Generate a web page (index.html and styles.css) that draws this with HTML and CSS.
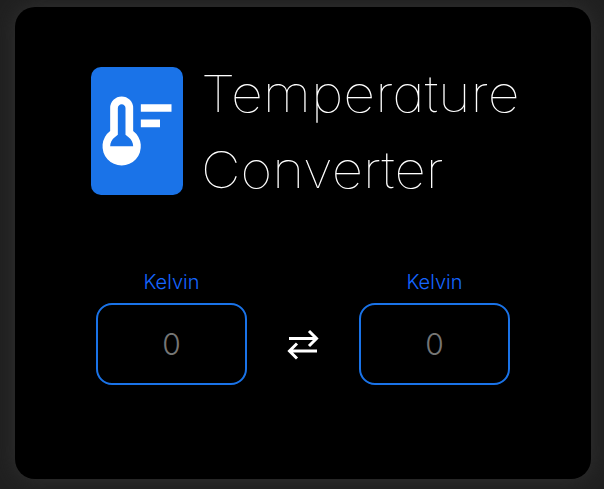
FILE: index.html
```
<!DOCTYPE html>
<html lang="en">
<head>
<meta charset="utf-8">
<title>Temperature Converter</title>
<link rel="stylesheet" href="styles.css">
</head>
<body>
<main class="card">
  <header class="header">
    <div class="logo">
      <svg viewBox="0 0 24 24" width="92" height="92" aria-hidden="true">
        <path fill="#fff" fill-rule="evenodd" d="M13 5h8v2h-8zM13 9h5v2h-5zM8 3a3 3 0 0 0-3 3v6a5 5 0 1 0 6 0V6a3 3 0 0 0-3-3zM5 16c0-.94.45-1.84 1.2-2.4L7 13V6c0-.55.45-1 1-1s1 .45 1 1v7l.8.6c.75.57 1.2 1.46 1.2 2.4z"/>
      </svg>
    </div>
    <h1 class="title"><span class="first">Temperature</span><br><span class="second">Converter</span></h1>
  </header>
  <section class="converter">
    <div class="field">
      <label class="label" for="from">Kelvin</label>
      <input class="value" id="from" placeholder="0">
    </div>
    <svg class="swap" viewBox="0 0 32 32" width="32" height="32" fill="none" stroke="#fff" stroke-width="3" aria-hidden="true">
      <path d="M2 10.5h27M22 3l7.500 7.500L22 18"/>
      <path d="M30 23H3M10 15.500L2.500 23l7.500 7.500"/>
    </svg>
    <div class="field">
      <label class="label" for="to">Kelvin</label>
      <input class="value" id="to" placeholder="0">
    </div>
  </section>
</main>
</body>
</html>
```
FILE: styles.css
```
* {
  box-sizing: border-box;
}
body {
  margin: 0;
  height: 489px;
  padding: 7px 13px 10px 15px;
  overflow: hidden;
  background: #202020;
  font-family: Inter, "Open Sans", sans-serif;
  font-feature-settings: "cv11";
}
.card {
  width: 576px;
  height: 472px;
  padding: 50px 76px 0;
  border-radius: 20px;
  background: #000;
  box-shadow: 0 0 20px #303030;
}
.header {
  display: flex;
  align-items: center;
  gap: 18px;
  height: 148px;
}
.logo {
  display: flex;
  align-items: center;
  flex: none;
  width: 92px;
  height: 128px;
  border-radius: 10px;
  background: #1a73e8;
}
.title {
  margin: 2px 0 0;
  color: #fff;
  font-size: 50px;
  font-weight: 130;
  line-height: 76px;
  white-space: nowrap;
}
.first,
.second {
  display: inline-block;
  transform-origin: left center;
}
.first {
  transform: scaleX(1.113);
}
.second {
  transform: scaleX(1.093);
}
.converter {
  display: flex;
  align-items: flex-end;
  justify-content: space-between;
  width: 414px;
  height: 120px;
  margin: 60px 0 0 5px;
}
.field {
  display: flex;
  flex-direction: column;
  align-items: center;
}
.label {
  margin-bottom: 6px;
  color: #1565ff;
  font-size: 20px;
  font-weight: 300;
  line-height: 30px;
}
.value {
  width: 151px;
  height: 82px;
  padding: 0 0 1px;
  border: 2px solid #1a73e8;
  border-radius: 16px;
  outline: 0;
  background: #000;
  color: #fff;
  font-family: inherit;
  font-size: 30px;
  font-weight: 300;
  text-align: center;
}
.value::placeholder {
  color: #757575;
}
.swap {
  margin-bottom: 25px;
}
```
